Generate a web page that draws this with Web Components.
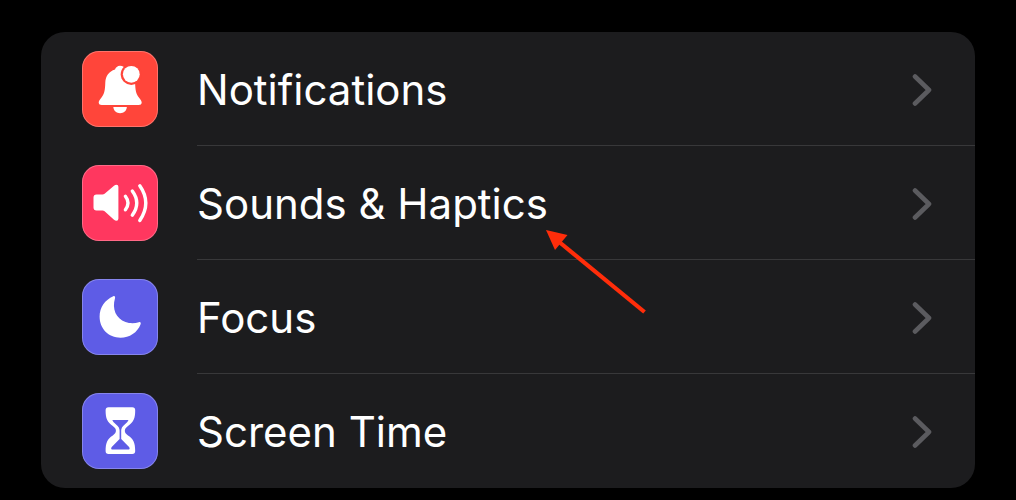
<!DOCTYPE html>
<html lang="en">
<head>
<meta charset="utf-8">
<meta name="viewport" content="width=device-width, initial-scale=1">
<title>Settings</title>
<style>
  body { margin: 0; background: #000; color: #fff; font-family: Inter, "Liberation Sans", sans-serif; }
</style>
</head>
<body>
<settings-list>
  <settings-row href="#notifications" color="#ff453a">
    <settings-icon slot="icon" name="bell"></settings-icon>Notifications
  </settings-row>
  <settings-row href="#sounds" color="#ff375f">
    <settings-icon slot="icon" name="speaker"></settings-icon>Sounds &amp; Haptics
    <pointer-arrow slot="note"></pointer-arrow>
  </settings-row>
  <settings-row href="#focus" color="#5e5ce6">
    <settings-icon slot="icon" name="moon"></settings-icon>Focus
  </settings-row>
  <settings-row href="#screen-time" color="#5e5ce6">
    <settings-icon slot="icon" name="hourglass"></settings-icon>Screen Time
  </settings-row>
</settings-list>

<script>
class SettingsList extends HTMLElement {
  constructor() {
    super();
    this.attachShadow({ mode: "open" }).innerHTML = `
      <style>
        :host { display: block; padding: 32px 41px 12px; }
        nav { display: flex; flex-direction: column; background: #1c1c1e; border-radius: 24px; }
        ::slotted(:last-child) { --divider: transparent; }
      </style>
      <nav aria-label="Settings"><slot></slot></nav>`;
  }
}

class SettingsRow extends HTMLElement {
  constructor() {
    super();
    this.attachShadow({ mode: "open" }).innerHTML = `
      <style>
        :host { display: block; }
        a { display: flex; gap: 39px; padding-left: 41px; color: inherit; text-decoration: none; }
        .tile { align-self: center; flex: none; box-sizing: border-box; width: 76px; height: 76px;
                border-radius: 17px; box-shadow: inset 0 0 0 1px rgba(255, 255, 255, .25); }
        .main { flex: 1; display: flex; align-items: center; justify-content: space-between;
                box-sizing: border-box; min-height: 114px; padding: 2px 43px 0 0;
                border-bottom: 1px solid var(--divider, #38383a); }
        .label { position: relative; font-size: 42px; line-height: 52px; white-space: nowrap; }
        .chevron { display: block; width: 20px; height: 32px; }
      </style>
      <a>
        <span class="tile"><slot name="icon"></slot></span>
        <span class="main">
          <span class="label"><slot></slot><slot name="note"></slot></span>
          <svg class="chevron" viewBox="0 0 20 32" aria-hidden="true">
            <path d="M3 2.500 17 16 3 29.500" fill="none" stroke="#5b5b5f" stroke-width="4.600" stroke-linecap="round" stroke-linejoin="round"/>
          </svg>
        </span>
      </a>`;
  }
  connectedCallback() {
    this.shadowRoot.querySelector("a").href = this.getAttribute("href");
    this.shadowRoot.querySelector(".tile").style.background = this.getAttribute("color");
  }
}

const ICONS = {
  bell: `
    <path fill="#fff" d="M38 14.700C35.500 14.700 33.700 16.500 33 18.500C27 20.500 23.600 25 23.300 31.500C23 39 22.600 42.500 19.500 46.500C17.800 48.800 16.700 50 16.700 51.500C16.700 53.200 18 54 19.700 54H56.700C58.500 54 59.700 53.200 59.700 51.500C59.700 50 58.600 48.800 56.900 46.500C53.800 42.500 53.400 39 53.100 31.500L50 20L41.500 15.700Q40 14.700 38 14.700Z"/>
    <circle cx="49.300" cy="23.300" r="10.600" fill="#ff453a"/>
    <circle cx="49.300" cy="23.300" r="8.400" fill="#fff"/>
    <path fill="#fff" d="M31.300 56H44.900C44.600 59.800 41.700 62.200 38.100 62.200S31.600 59.800 31.300 56Z"/>`,
  speaker: `
    <path fill="#fff" d="M14.500 29.500H20.500Q21.700 29.500 22.600 28.700L32 20.700Q33.200 19.700 34.500 19.700Q36.400 19.700 36.400 21.800V53.500Q36.400 55.700 34.500 55.700Q33.200 55.700 32 54.700L22.600 46.300Q21.700 45.500 20.500 45.500H14.500Q11.500 45.500 11.500 42.500V32.500Q11.500 29.500 14.500 29.500Z"/>
    <g fill="none" stroke="#fff" stroke-width="3.400" stroke-linecap="round">
      <path d="M43.400 31.300Q48.600 38 43.400 44.800"/>
      <path d="M50.300 26Q59.200 38 50.300 50.200"/>
      <path d="M57.800 20.800Q69.800 38 57.800 55.500"/>
    </g>`,
  moon: `
    <path fill="#fff" d="M31.300 17.200C32.500 16.700 33.500 17.700 33 19.200C29.800 30 34 39.500 43.500 43C48.500 44.800 53 44.300 56.800 43.200C58.300 42.800 59.200 43.800 58.600 45.200C55.500 53.500 47.500 58.700 38.500 58.700C26.500 58.700 17.600 49.800 17.600 37.500C17.600 28.500 23 20.700 31.300 17.200Z"/>`,
  hourglass: `
    <path fill="#fff" d="M26.500 14.300H50.300Q53.200 14.300 53.200 17.300C53.200 26 51.500 29 46 33C41.800 36 41.800 39.500 46 42.400C51.500 46 53.200 49.500 53.200 58Q53.200 61 50.300 61H26.500Q23.600 61 23.600 58C23.600 49.500 25.300 46 30.800 42.400C35 39.500 35 36 30.800 33C25.300 29 23.600 26 23.600 17.300Q23.600 14.300 26.500 14.300Z"/>
    <path fill="#5e5ce6" d="M30.300 27H46.500Q45.800 29.200 43 31.200C40 33.500 39.200 35.500 39.200 37.700V46L47.300 54.300Q48.300 56.500 46.800 56.500H30Q28.500 56.500 29.500 54.300L37.600 46V37.700C37.600 35.500 36.800 33.500 33.800 31.200Q31 29.200 30.300 27Z"/>`
};

class SettingsIcon extends HTMLElement {
  connectedCallback() {
    if (this.shadowRoot) return;
    this.attachShadow({ mode: "open" }).innerHTML = `
      <style>:host, svg { display: block; width: 100%; height: 100%; }</style>
      <svg viewBox="0 0 76 76" aria-hidden="true">${ICONS[this.getAttribute("name")]}</svg>`;
  }
}

class PointerArrow extends HTMLElement {
  constructor() {
    super();
    this.attachShadow({ mode: "open" }).innerHTML = `
      <style>
        :host { position: absolute; left: 100%; top: 100%; margin-left: -2px; z-index: 1; pointer-events: none; }
        svg { display: block; width: 102px; height: 86px; }
      </style>
      <svg viewBox="0 0 102 86" aria-hidden="true">
        <path d="M12 11 98.500 82" stroke="#ff2d0a" stroke-width="4.200"/>
        <path d="M0 0 21.500 5 9 20Z" fill="#ff2d0a"/>
      </svg>`;
  }
}

customElements.define("settings-list", SettingsList);
customElements.define("settings-icon", SettingsIcon);
customElements.define("pointer-arrow", PointerArrow);
customElements.define("settings-row", SettingsRow);
</script>
</body>
</html>
